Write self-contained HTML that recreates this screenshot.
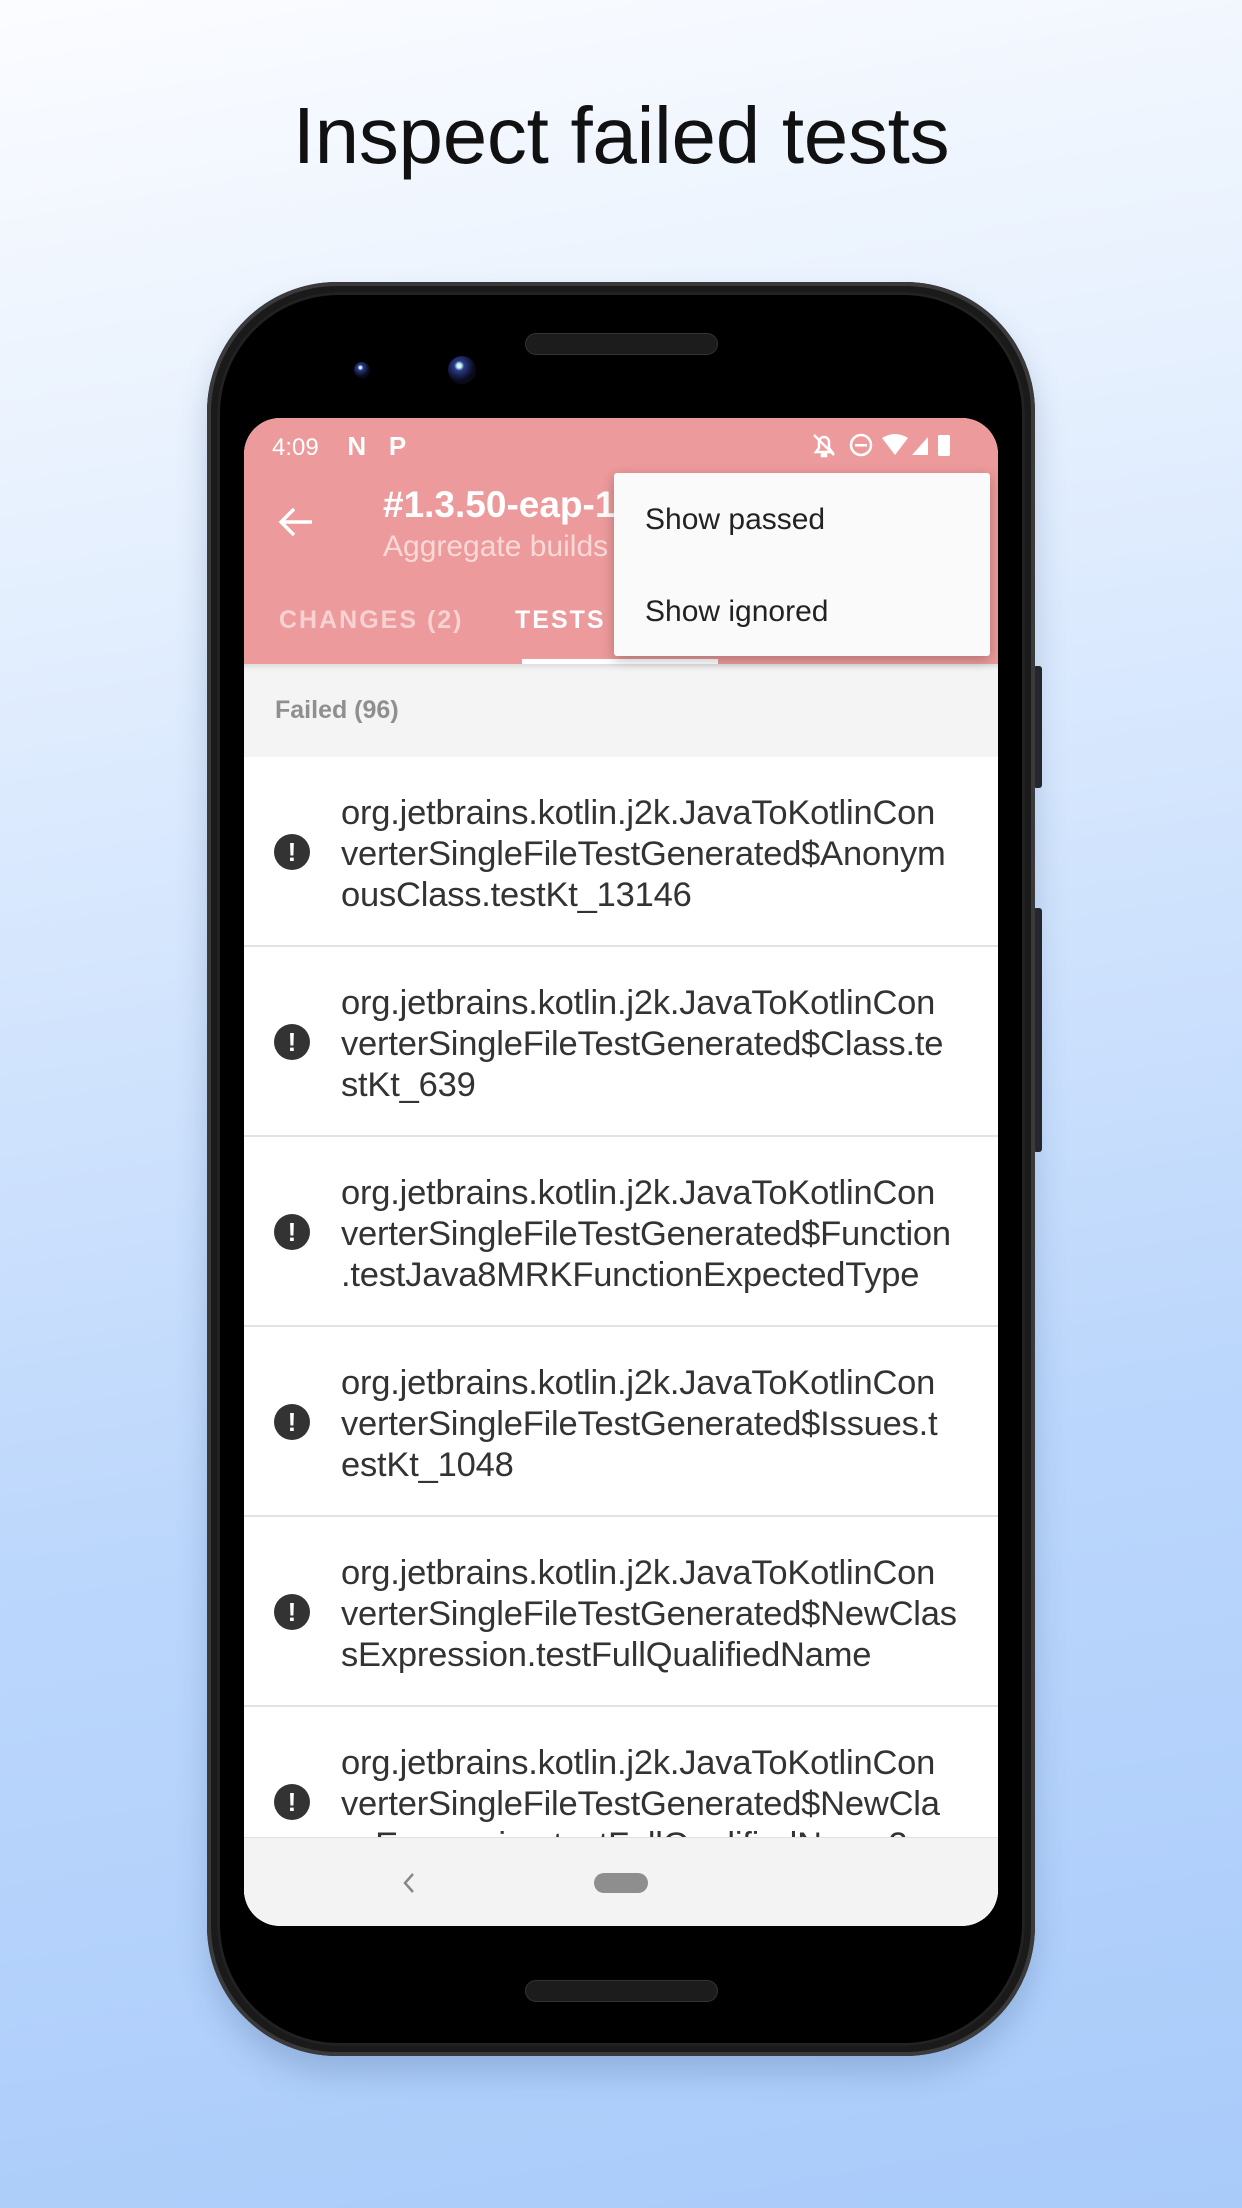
<!DOCTYPE html>
<html><head><meta charset="utf-8"><style>
*{margin:0;padding:0;box-sizing:border-box}
body{width:1242px;height:2208px;overflow:hidden;position:relative;font-family:"Liberation Sans",sans-serif;background:linear-gradient(170deg,#fbfcff 0%,#e4effe 25%,#bcd7fc 65%,#a9cbfa 100%)}
.title{position:absolute;top:90px;left:0;width:1242px;text-align:center;font-size:80px;font-weight:300;color:#111;letter-spacing:-0.3px}
.phone{position:absolute;left:207px;top:282px;width:828px;height:1774px;border-radius:130px;background:#1a1a1a;box-shadow:0 18px 30px rgba(60,90,140,.25), inset 0 0 0 4px #3a3a3a}
.inner{position:absolute;left:217px;top:292px;width:808px;height:1754px;border-radius:122px;background:#000;box-shadow:inset 0 0 0 3px #222}
.btn{position:absolute;left:1033px;width:9px;background:#222;border-radius:3px}
.ear{position:absolute;left:525px;width:193px;height:22px;border-radius:11px;background:#1c1c1c;border:1px solid #333}
.cam{position:absolute;border-radius:50%;background:radial-gradient(circle at 40% 35%,#cfe 0 8%,#2a3a8a 20%,#0a0a1a 60%)}
.screen{position:absolute;left:244px;top:418px;width:754px;height:1508px;border-radius:36px;overflow:hidden;background:#fff}
.appbar{position:absolute;left:0;top:0;width:754px;height:246px;background:#ec9a9b}
.status{position:absolute;top:13px;left:28px;color:#fff;font-size:24px}
.hdr-t{position:absolute;left:139px;top:66px;color:#fff;font-size:37px;font-weight:bold}
.hdr-s{position:absolute;left:139px;top:112px;color:#fbd8d8;font-size:30px}
.tab{position:absolute;top:188px;font-size:25px;font-weight:bold;letter-spacing:2px}
.ind{position:absolute;left:278px;top:241px;width:196px;height:5px;background:#fff}
.menu{position:absolute;left:370px;top:55px;width:376px;height:183px;background:#fafafa;border-radius:3px;box-shadow:0 4px 12px rgba(0,0,0,.25)}
.menu div{position:absolute;left:31px;font-size:30px;color:#222}
.fh{position:absolute;left:0;top:246px;width:754px;height:93px;background:#f4f4f4;box-shadow:inset 0 6px 6px -4px rgba(0,0,0,.12)}
.fh span{position:absolute;left:31px;top:32px;font-size:25px;font-weight:bold;color:#8f8f8f}
.item{position:absolute;left:0;width:754px;height:190px;border-bottom:2px solid #e2e2e2;background:#fff}
.item .ic{position:absolute;left:30px;top:77px;width:36px;height:36px;border-radius:50%;background:#333;color:#fff;font-weight:bold;font-size:26px;text-align:center;line-height:36px}
.item .tx{position:absolute;left:97px;top:36px;font-size:34.5px;line-height:41px;color:#333;letter-spacing:-0.2px;white-space:nowrap}
.nav{position:absolute;left:0;top:1419px;width:754px;height:89px;background:#f3f3f3;border-top:1px solid #e0e0e0}
</style></head><body>
<div class="title">Inspect failed tests</div>
<div class="btn" style="top:666px;height:122px"></div>
<div class="btn" style="top:908px;height:244px"></div>
<div class="phone"></div>
<div class="inner"></div>
<div class="ear" style="top:333px"></div>
<div class="ear" style="top:1980px"></div>
<div class="cam" style="left:354px;top:362px;width:16px;height:16px"></div>
<div class="cam" style="left:448px;top:356px;width:28px;height:28px"></div>
<div class="screen">
 <div class="appbar">
  <div class="status">4:09 <b style="margin-left:22px;font-size:26px">N</b> <b style="margin-left:16px;font-size:26px">P</b></div>
  <svg style="position:absolute;left:566px;top:14px" width="170" height="26" viewBox="0 0 170 26" fill="#fff">
   <path d="M6 20h16l-3-4v-6a5 5 0 0 0-10 0v6z M12 22h4v2h-4z" fill="none" stroke="#fff" stroke-width="2.5"/><path d="M4 3l20 20" stroke="#fff" stroke-width="2.5"/>
   <circle cx="51" cy="13" r="10" fill="none" stroke="#fff" stroke-width="2.5"/><rect x="45" y="12" width="12" height="2.5"/>
   <path d="M72 6q13-8 26 0l-13 17z"/><path d="M102 23l16-18v18z"/>
   <rect x="128" y="3" width="12" height="21" rx="1.5"/>
  </svg>
  <svg style="position:absolute;left:34px;top:88px" width="36" height="32" viewBox="0 0 36 32"><path d="M34 16H4M16 3L3 16l13 13" fill="none" stroke="#fff" stroke-width="3.5"/></svg>
  <div class="hdr-t">#1.3.50-eap-1</div>
  <div class="hdr-s">Aggregate builds</div>
  <div class="tab" style="left:35px;color:#f8d2d2">CHANGES (2)</div>
  <div class="tab" style="left:271px;color:#fff">TESTS</div>
  <div class="ind"></div>
 </div>
 <div class="fh"><span>Failed (96)</span></div>
 <div class="item" style="top:339px"><div class="ic">!</div><div class="tx">org.jetbrains.kotlin.j2k.JavaToKotlinCon<br>verterSingleFileTestGenerated$Anonym<br>ousClass.testKt_13146</div></div>
 <div class="item" style="top:529px"><div class="ic">!</div><div class="tx">org.jetbrains.kotlin.j2k.JavaToKotlinCon<br>verterSingleFileTestGenerated$Class.te<br>stKt_639</div></div>
 <div class="item" style="top:719px"><div class="ic">!</div><div class="tx">org.jetbrains.kotlin.j2k.JavaToKotlinCon<br>verterSingleFileTestGenerated$Function<br>.testJava8MRKFunctionExpectedType</div></div>
 <div class="item" style="top:909px"><div class="ic">!</div><div class="tx">org.jetbrains.kotlin.j2k.JavaToKotlinCon<br>verterSingleFileTestGenerated$Issues.t<br>estKt_1048</div></div>
 <div class="item" style="top:1099px"><div class="ic">!</div><div class="tx">org.jetbrains.kotlin.j2k.JavaToKotlinCon<br>verterSingleFileTestGenerated$NewClas<br>sExpression.testFullQualifiedName</div></div>
 <div class="item" style="top:1289px"><div class="ic">!</div><div class="tx">org.jetbrains.kotlin.j2k.JavaToKotlinCon<br>verterSingleFileTestGenerated$NewCla<br>ssExpression.testFullQualifiedName2</div></div>
 <div class="menu"><div style="top:30px">Show passed</div><div style="top:122px">Show ignored</div></div>
 <div class="nav">
  <svg style="position:absolute;left:158px;top:34px" width="14" height="22" viewBox="0 0 14 22"><path d="M11 2L3 11l8 9" fill="none" stroke="#888" stroke-width="2.5"/></svg>
  <div style="position:absolute;left:350px;top:35px;width:54px;height:20px;border-radius:10px;background:#8e8e8e"></div>
 </div>
</div>
</body></html>
